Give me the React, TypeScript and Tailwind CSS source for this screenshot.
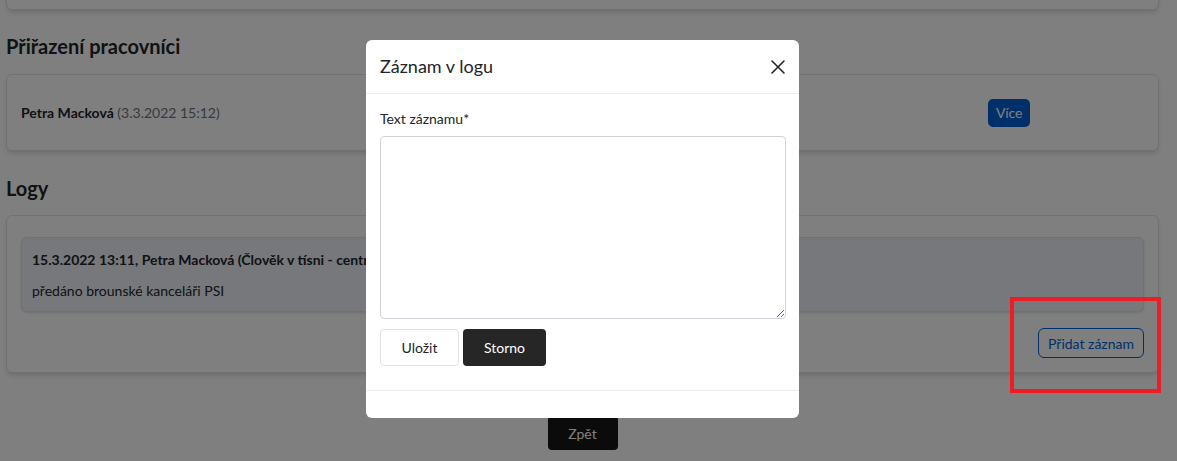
export default function App() {
  return (
    <div className="relative h-[461px] w-[1177px] overflow-hidden bg-white text-[#212529]" style={{ fontFamily: 'Lato, "Open Sans", sans-serif' }}>
      {/* page under the modal */}
      <div className="w-[1165px] px-[6px]">
        <div className="-mt-[40px] h-[50px] rounded-md border border-[#dee2e6] bg-white shadow-md" />

        <h2 className="mt-[23px] text-[20px] font-bold leading-[26px]">Přiřazení pracovníci</h2>
        <div className="mt-[15px] flex h-[77px] items-center rounded-md border border-[#dee2e6] bg-white pl-[14px] shadow-md">
          <div className="w-[967px] text-[14px]">
            <span className="font-bold">Petra Macková</span>{' '}
            <span className="text-[#6c757d]">(3.3.2022 15:12)</span>
          </div>
          <button className="h-[28px] rounded-[5px] bg-[#0060d4] px-[8px] text-[14px] text-white">Více</button>
        </div>

        <h2 className="mt-[24px] text-[20px] font-bold leading-[26px]">Logy</h2>
        <div className="mt-[14px] h-[158px] rounded-md border border-[#dee2e6] bg-white px-[14px] pt-[21px] shadow-md">
          <div className="h-[75px] rounded-md border border-[#dee2e6] bg-[#eef0f6] px-[10px] pt-[12px] shadow-sm">
            <div className="text-[14px] font-bold leading-[20px]">15.3.2022 13:11, Petra Macková (Člověk v tísni - centrála Praha)</div>
            <div className="mt-[11px] text-[14px] leading-[20px]">předáno brounské kanceláři PSI</div>
          </div>
          <div className="mt-[16px] flex justify-end">
            <button className="h-[30px] rounded-[6px] border border-[#0060d4] px-[9px] text-[14px] text-[#0060d4]">Přidat záznam</button>
          </div>
        </div>

        <div className="mt-[43px] flex justify-center">
          <button className="h-[34px] w-[70px] rounded-[4px] bg-[#161616] text-[14px] text-white">Zpět</button>
        </div>
      </div>

      {/* backdrop */}
      <div className="absolute inset-0 bg-black/50" />

      {/* annotation */}
      <div className="absolute left-[1010px] top-[297px] h-[96px] w-[151px] border-[4px] border-[#ee1c25]" />

      {/* modal */}
      <div className="absolute left-[366px] top-[40px] flex h-[378px] w-[433px] flex-col rounded-[6px] bg-white">
        <div className="flex h-[54px] items-center justify-between border-b border-[#eeeeee] pl-[14px] pr-[13px]">
          <span className="text-[18px] text-[#212529]">Záznam v logu</span>
          <svg width="16" height="16" viewBox="0 0 16 16" fill="none" stroke="#212529" strokeWidth="1.6" strokeLinecap="round">
            <path d="M2 2l12 12M14 2L2 14" />
          </svg>
        </div>
        <div className="flex-1 border-b border-[#eeeeee] px-[14px] pt-[15px]">
          <div className="text-[14px] leading-[20px]">Text záznamu*</div>
          <textarea className="mt-[7px] block h-[183px] w-[406px] rounded-[4px] border border-[#ced4da] bg-white" />
          <div className="mt-[10px] flex gap-[4px]">
            <button className="h-[37px] w-[79px] rounded-[4px] border border-[#dee2e6] bg-white text-[14px] text-[#212529]">Uložit</button>
            <button className="h-[37px] w-[83px] rounded-[4px] bg-[#262626] text-[14px] text-white">Storno</button>
          </div>
        </div>
        <div className="h-[27px]" />
      </div>
    </div>
  )
}
